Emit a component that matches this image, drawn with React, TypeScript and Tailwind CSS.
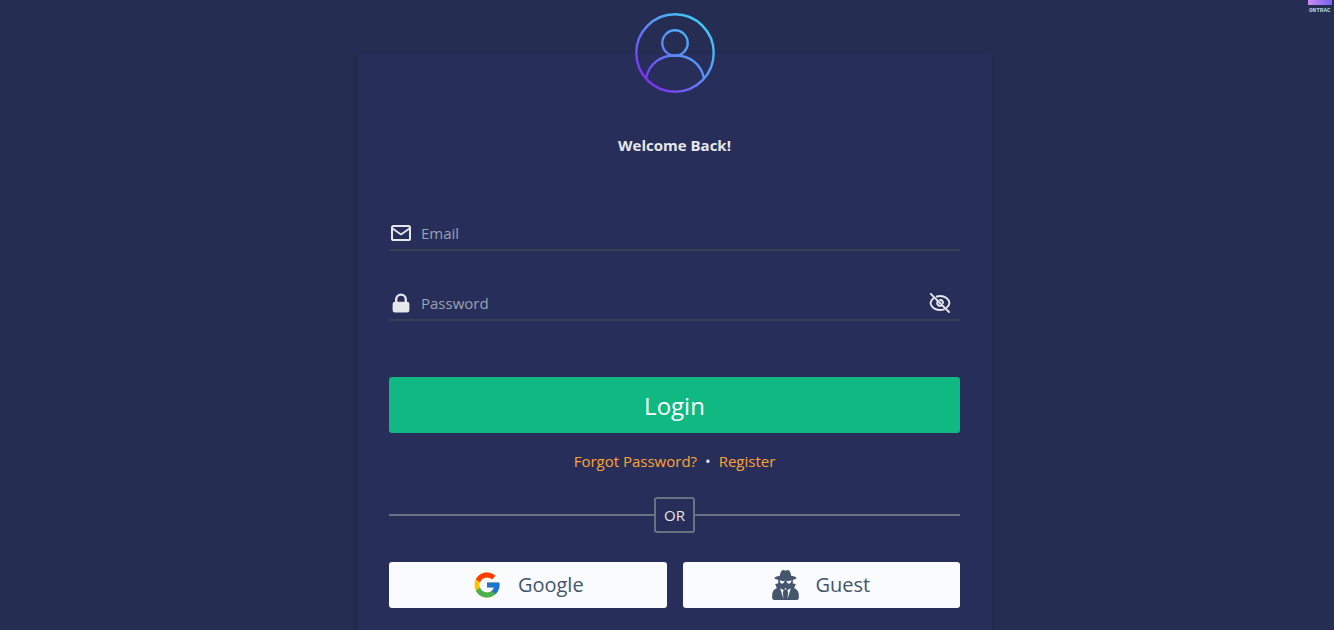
import { useState } from "react";
import { FcGoogle } from "react-icons/fc";
import { HiLockClosed } from "react-icons/hi";

function Avatar() {
  return (
    <svg viewBox="0 0 80 80" className="size-20" fill="none" strokeWidth="2.4" aria-hidden="true">
      <defs>
        <linearGradient id="ring" gradientUnits="userSpaceOnUse" x1="12" y1="68" x2="68" y2="12">
          <stop stopColor="#7c32f5" />
          <stop offset="0.5" stopColor="#5b8cf8" />
          <stop offset="1" stopColor="#42c8f5" />
        </linearGradient>
      </defs>
      <g stroke="url(#ring)">
        <circle cx="40" cy="40" r="38.7" />
        <circle cx="40" cy="30" r="12.7" />
        <path d="M11 65C14.500 50 26 42.500 40 42.500S65.500 50 69 65" />
      </g>
    </svg>
  );
}

function Logo() {
  return (
    <svg viewBox="0 0 26 14" className="absolute top-0 right-0 h-3.5 w-[26px]" role="img" aria-label="ONTRAC">
      <defs>
        <linearGradient id="brand">
          <stop stopColor="#c98cf5" />
          <stop offset="1" stopColor="#7463ee" />
        </linearGradient>
      </defs>
      <rect x="0" width="24" height="5" fill="url(#brand)" />
      <text x="1" y="12" fontSize="6" fontWeight="700" fontFamily="Liberation Mono, monospace" fill="#a9d5e2">ONTRAC</text>
    </svg>
  );
}

function MailIcon() {
  return (
    <svg viewBox="0 0 24 24" className="size-6" fill="none" stroke="currentColor" strokeWidth="2" strokeLinejoin="round" aria-hidden="true">
      <rect x="3" y="5" width="18" height="14" rx="1.6" />
      <path d="M3.500 7.500 12 13.400l8.500-5.900" strokeWidth="1.8" />
    </svg>
  );
}

function EyeOffIcon() {
  return (
    <svg viewBox="0 0 24 24" className="size-6" fill="none" stroke="currentColor" strokeWidth="1.9" strokeLinecap="round" aria-hidden="true">
      <path d="M2.800 2.800 21 21" />
      <path d="M8.800 5.500C9.800 5.200 10.900 5 12 5c5.200 0 9 3 9.500 7-.3 1.700-1.200 3.200-2.600 4.400" />
      <path d="M5.200 7.500C3.800 8.700 2.800 10.300 2.500 12c.5 4 4.300 7 9.500 7 1.400 0 2.700-.2 3.900-.6" />
      <path d="M9.500 10.700a2.900 2.900 0 0 0 3.800 3.900M12 9a3 3 0 0 1 3 3" />
    </svg>
  );
}

function SpyIcon() {
  return (
    <svg viewBox="0 0 80 90" className="h-[30px] w-[27px]" fill="currentColor" aria-hidden="true">
      <path d="M23 17C25 7 28 0 33 0c3 0 4 2 7 2s4-2 7-2c5 0 8 7 10 17 10 2 16 4 16 7 0 4-14 7-33 7S7 28 7 24c0-3 6-5 16-7Z" />
      <path d="M18 28c14 4 30 4 44 0v10c-1 11-8 20-14 22l-8-6-8 6c-6-2-13-11-14-22V28Z" />
      <path d="M9 42l16-3 8 15 7 5 7-5 8-15 16 3-5 12c9 4 14 11 14 21v9c0 4-3 6-7 6H7c-4 0-7-2-7-6v-9c0-10 5-17 14-21L9 42Z" />
      <path d="M22 31c5 2 10 3 15 3-1 5-4 7-8 7-4-1-6-4-7-10ZM58 31c-5 2-10 3-15 3 1 5 4 7 8 7 4-1 6-4 7-10Z" fill="#f9fbfd" />
      <path d="M24 55l11 6-3 5 2 21ZM56 55l-11 6 3 5-2 21Z" fill="#f9fbfd" />
    </svg>
  );
}

const field = "flex h-9 items-center border-b-2 border-[#374151] pt-0.5 text-gray-200";
const input = "min-w-0 flex-1 bg-transparent px-2 text-[15px] leading-6 text-gray-200 outline-none placeholder:text-gray-400";
const alt = "flex h-[46px] items-center justify-center gap-4 rounded-[3px] bg-[#f9fbfd] text-xl font-medium text-slate-600";

export default function App() {
  const [visible, setVisible] = useState(false);
  return (
    <div className="relative min-h-screen overflow-hidden bg-[#252d53] pt-[53px] pl-[15px] font-['Open_Sans','Noto_Sans',sans-serif] text-gray-200">
      <Logo />
      <main className="mx-auto flex min-h-[calc(100vh-53px)] w-full max-w-[635px] flex-col bg-[#272e5a] px-8 pb-[22px] shadow-[0_2px_3px_#1b2142]">
        <div className="-mt-10 flex justify-center"><Avatar /></div>
        <h1 className="mt-10 text-center text-[15px] leading-6 font-bold">Welcome Back!</h1>
        <form className="mt-[58px]" onSubmit={(e) => e.preventDefault()}>
          <div className={field}>
            <label htmlFor="email" aria-label="Email"><MailIcon /></label>
            <input id="email" type="email" placeholder="Email" className={input} />
          </div>
          <div className={`${field} mt-[34px]`}>
            <label htmlFor="password" aria-label="Password"><HiLockClosed size={24} /></label>
            <input id="password" type={visible ? "text" : "password"} placeholder="Password" className={input} />
            <button type="button" aria-label="Show password" className="mr-2" onClick={() => setVisible(!visible)}><EyeOffIcon /></button>
          </div>
          <button type="submit" className="mt-14 h-14 w-full rounded-[3px] bg-[#10b981] pt-0.5 text-2xl text-white">Login</button>
        </form>
        <nav className="mt-4 flex justify-center gap-2 text-[15px] leading-6">
          <a href="#forgot" className="text-[#ffa333]">Forgot Password?</a>
          <span>•</span>
          <a href="#register" className="text-[#ffa333]">Register</a>
        </nav>
        <div className="mt-6 flex items-center">
          <span className="h-0.5 flex-1 bg-gray-500" />
          <span className="flex h-9 w-[41px] items-center justify-center rounded-[3px] border-2 border-gray-500 text-[15px]">OR</span>
          <span className="h-0.5 flex-1 bg-gray-500" />
        </div>
        <div className="mt-[29px] grid grid-cols-2 gap-4">
          <button type="button" className={alt}><FcGoogle size={30} />Google</button>
          <button type="button" className={alt}><SpyIcon />Guest</button>
        </div>
      </main>
    </div>
  );
}
